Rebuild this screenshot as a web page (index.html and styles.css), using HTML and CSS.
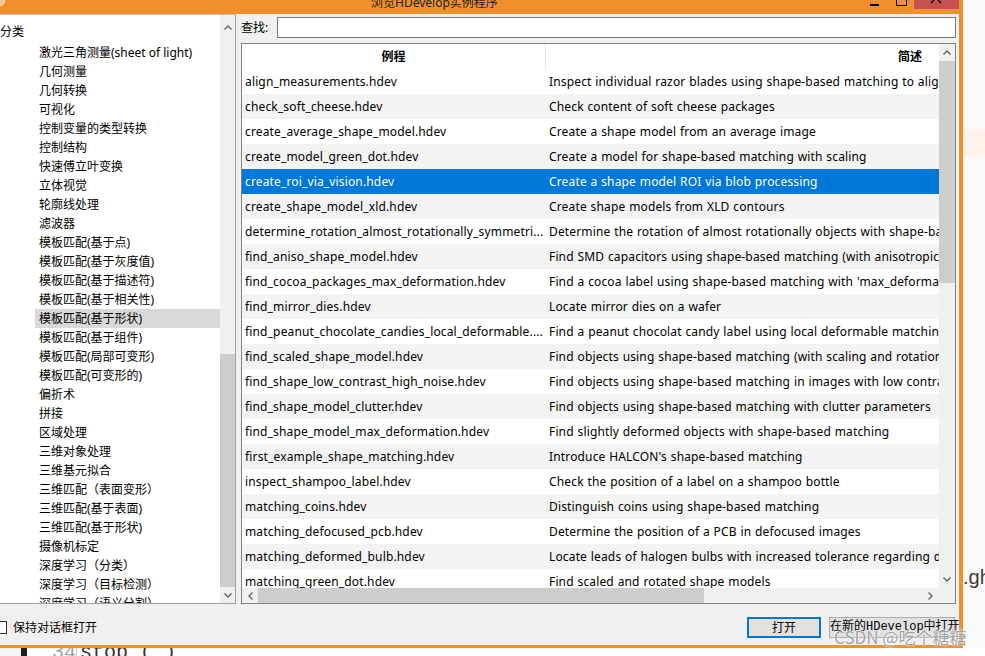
FILE: index.html
```html
<!DOCTYPE html>
<html lang="zh">
<head>
<meta charset="utf-8">
<title>浏览HDevelop实例程序</title>
<link rel="stylesheet" href="styles.css">
</head>
<body>
<div class="window">
  <div class="titlebar">
    <svg class="appicon" width="8" height="8" viewBox="0 0 8 8"><circle cx="2" cy="1" r="4.5" fill="#f7c48e" stroke="#fbe3c8" stroke-width="1"/></svg>
    <div class="title">浏览HDevelop实例程序</div>
    <div class="winbtns">
      <svg class="wb-min" width="9" height="14" viewBox="0 0 9 14"><rect x="0" y="4" width="9" height="2" fill="#000"/></svg>
      <svg class="wb-max" width="11" height="14" viewBox="0 0 11 14"><rect x="0.5" y="-4.5" width="10" height="10" fill="none" stroke="#000" stroke-width="1"/></svg>
      <div class="wb-close"><svg width="45" height="9" viewBox="0 0 45 9"><path d="M17 -7 L27 3 M27 -7 L17 3" stroke="#000" stroke-width="1.2" fill="none"/></svg></div>
    </div>
  </div>
  <div class="main">
    <div class="tree">
      <div class="tree-list">
        <div class="tree-head">分类</div>
        <div class="tree-item">激光三角测量(sheet of light)</div>
        <div class="tree-item">几何测量</div>
        <div class="tree-item">几何转换</div>
        <div class="tree-item">可视化</div>
        <div class="tree-item">控制变量的类型转换</div>
        <div class="tree-item">控制结构</div>
        <div class="tree-item">快速傅立叶变换</div>
        <div class="tree-item">立体视觉</div>
        <div class="tree-item">轮廓线处理</div>
        <div class="tree-item">滤波器</div>
        <div class="tree-item">模板匹配(基于点)</div>
        <div class="tree-item">模板匹配(基于灰度值)</div>
        <div class="tree-item">模板匹配(基于描述符)</div>
        <div class="tree-item">模板匹配(基于相关性)</div>
        <div class="tree-item sel">模板匹配(基于形状)</div>
        <div class="tree-item">模板匹配(基于组件)</div>
        <div class="tree-item">模板匹配(局部可变形)</div>
        <div class="tree-item">模板匹配(可变形的)</div>
        <div class="tree-item">偏折术</div>
        <div class="tree-item">拼接</div>
        <div class="tree-item">区域处理</div>
        <div class="tree-item">三维对象处理</div>
        <div class="tree-item">三维基元拟合</div>
        <div class="tree-item">三维匹配（表面变形）</div>
        <div class="tree-item">三维匹配(基于表面)</div>
        <div class="tree-item">三维匹配(基于形状)</div>
        <div class="tree-item">摄像机标定</div>
        <div class="tree-item">深度学习（分类）</div>
        <div class="tree-item">深度学习（目标检测）</div>
        <div class="tree-item">深度学习（语义分割）</div>
      </div>
      <div class="vscroll tree-scroll">
        <div class="sb-btn tree-up"><svg width="8" height="5" viewBox="0 0 8 5"><path d="M0.5 4.5 L4 1 L7.5 4.5" fill="none" stroke="#606060" stroke-width="1.3"/></svg></div>
        <div class="sb-track"><div class="sb-thumb tree-thumb"></div></div>
        <div class="sb-btn tree-down"><svg width="8" height="5" viewBox="0 0 8 5"><path d="M0.5 0.5 L4 4 L7.5 0.5" fill="none" stroke="#606060" stroke-width="1.3"/></svg></div>
      </div>
    </div>
    <div class="right">
      <div class="search">
        <span class="search-label">查找:</span>
        <div class="search-input"></div>
      </div>
      <div class="table">
        <div class="tbody">
          <div class="thead"><div class="c1">例程</div><div class="c2">简述</div></div>
          <div class="row"><div class="c1">align_measurements.hdev</div><div class="c2">Inspect individual razor blades using shape-based matching to align the measurements</div></div>
          <div class="row"><div class="c1">check_soft_cheese.hdev</div><div class="c2">Check content of soft cheese packages</div></div>
          <div class="row"><div class="c1">create_average_shape_model.hdev</div><div class="c2">Create a shape model from an average image</div></div>
          <div class="row"><div class="c1">create_model_green_dot.hdev</div><div class="c2">Create a model for shape-based matching with scaling</div></div>
          <div class="row sel"><div class="c1">create_roi_via_vision.hdev</div><div class="c2">Create a shape model ROI via blob processing</div></div>
          <div class="row"><div class="c1">create_shape_model_xld.hdev</div><div class="c2">Create shape models from XLD contours</div></div>
          <div class="row"><div class="c1">determine_rotation_almost_rotationally_symmetri...</div><div class="c2">Determine the rotation of almost rotationally objects with shape-based matching</div></div>
          <div class="row"><div class="c1">find_aniso_shape_model.hdev</div><div class="c2">Find SMD capacitors using shape-based matching (with anisotropic scaling)</div></div>
          <div class="row"><div class="c1">find_cocoa_packages_max_deformation.hdev</div><div class="c2">Find a cocoa label using shape-based matching with 'max_deformation'</div></div>
          <div class="row"><div class="c1">find_mirror_dies.hdev</div><div class="c2">Locate mirror dies on a wafer</div></div>
          <div class="row"><div class="c1">find_peanut_chocolate_candies_local_deformable....</div><div class="c2">Find a peanut chocolat candy label using local deformable matching</div></div>
          <div class="row"><div class="c1">find_scaled_shape_model.hdev</div><div class="c2">Find objects using shape-based matching (with scaling and rotation)</div></div>
          <div class="row"><div class="c1">find_shape_low_contrast_high_noise.hdev</div><div class="c2">Find objects using shape-based matching in images with low contrast and high noise</div></div>
          <div class="row"><div class="c1">find_shape_model_clutter.hdev</div><div class="c2">Find objects using shape-based matching with clutter parameters</div></div>
          <div class="row"><div class="c1">find_shape_model_max_deformation.hdev</div><div class="c2">Find slightly deformed objects with shape-based matching</div></div>
          <div class="row"><div class="c1">first_example_shape_matching.hdev</div><div class="c2">Introduce HALCON's shape-based matching</div></div>
          <div class="row"><div class="c1">inspect_shampoo_label.hdev</div><div class="c2">Check the position of a label on a shampoo bottle</div></div>
          <div class="row"><div class="c1">matching_coins.hdev</div><div class="c2">Distinguish coins using shape-based matching</div></div>
          <div class="row"><div class="c1">matching_defocused_pcb.hdev</div><div class="c2">Determine the position of a PCB in defocused images</div></div>
          <div class="row"><div class="c1">matching_deformed_bulb.hdev</div><div class="c2">Locate leads of halogen bulbs with increased tolerance regarding deformations</div></div>
          <div class="row"><div class="c1">matching_green_dot.hdev</div><div class="c2">Find scaled and rotated shape models</div></div>
        </div>
        <div class="vscroll table-vs">
          <div class="sb-btn"><svg width="8" height="5" viewBox="0 0 8 5"><path d="M0.5 4.5 L4 1 L7.5 4.5" fill="none" stroke="#606060" stroke-width="1.3"/></svg></div>
          <div class="sb-track"><div class="sb-thumb table-thumb"></div></div>
          <div class="sb-btn"><svg width="8" height="5" viewBox="0 0 8 5"><path d="M0.5 0.5 L4 4 L7.5 0.5" fill="none" stroke="#606060" stroke-width="1.3"/></svg></div>
        </div>
        <div class="hscroll">
          <div class="hs-btn hs-left"><svg width="5" height="8" viewBox="0 0 5 8"><path d="M4.5 0.5 L1 4 L4.5 7.5" fill="none" stroke="#606060" stroke-width="1.3"/></svg></div>
          <div class="hs-thumb"></div>
          <div class="hs-track"></div>
          <div class="hs-btn hs-right"><svg width="5" height="8" viewBox="0 0 5 8"><path d="M0.5 0.5 L4 4 L0.5 7.5" fill="none" stroke="#606060" stroke-width="1.3"/></svg></div>
        </div>
        <div class="corner"></div>
      </div>
    </div>
  </div>
  <div class="footer">
    <label class="keep"><span class="box"></span>保持对话框打开</label>
    <div class="buttons">
      <button class="btn primary">打开</button>
      <button class="btn alt">在新的HDevelop中打开</button>
    </div>
  </div>
</div>
<div class="side">
  <div class="peach"></div>
  <div class="gh">.gh</div>
</div>
<div class="editor">
  <span class="gut-a"></span>
  <span class="gut-b"></span>
  <span class="lineno">34</span>
  <span class="gut-line"></span>
  <span class="code">stop ( )</span>
</div>
<div class="watermark">CSDN @吃个糖糖</div>
</body>
</html>
```
FILE: styles.css
```css
html, body {
  margin: 0;
  padding: 0;
}
body {
  position: relative;
  width: 985px;
  height: 656px;
  overflow: hidden;
  background: #fafafa;
  display: grid;
  grid-template-columns: 963px 22px;
  grid-template-rows: 648px 8px;
  font-family: "Noto Sans", "Noto Sans CJK SC", sans-serif;
  font-size: 12px;
  color: #000;
}

/* ---------- window ---------- */
.window {
  display: flex;
  flex-direction: column;
  background: #f0f0f0;
  border-right: 4px solid #f0902b;
  border-bottom: 3px solid #f0902b;
  overflow: hidden;
}
.titlebar {
  flex: none;
  height: 14px;
  background: #f0902b;
  display: flex;
  align-items: flex-start;
  overflow: hidden;
}
.appicon {
  flex: none;
  margin-left: -2px;
}
.title {
  margin-left: 365px;
  margin-top: -3px;
  line-height: 12px;
  font-size: 12px;
  color: #1e1e1e;
  white-space: nowrap;
}
.winbtns {
  margin-left: auto;
  display: flex;
  align-items: flex-start;
}
.wb-min { margin-right: 17px; }
.wb-max { margin-right: 7px; }
.wb-close {
  width: 45px;
  height: 9px;
  background: #c75050;
  display: flex;
}

.main {
  flex: none;
  height: 590px;
  display: flex;
  gap: 5px;
  padding-right: 3px;
}

/* ---------- tree ---------- */
.tree {
  flex: none;
  width: 236px;
  box-sizing: border-box;
  background: #fff;
  border-top: 1px solid #c4c4c4;
  border-right: 1px solid #a0a0a0;
  border-bottom: 1px solid #a0a0a0;
  display: flex;
}
.tree-list {
  width: 220px;
  flex: none;
  overflow: hidden;
}
.tree-head {
  height: 28px;
  box-sizing: border-box;
  padding-top: 7px;
  line-height: 19px;
  white-space: nowrap;
}
.tree-item {
  height: 19px;
  line-height: 19px;
  margin-left: 35px;
  padding-left: 4px;
  white-space: nowrap;
}
.tree-item.sel { background: #d9d9d9; }

.vscroll {
  background: #f0f0f0;
  display: flex;
  flex-direction: column;
}
.tree-scroll {
  width: 15px;
  flex: none;
}
.sb-btn {
  flex: none;
  height: 17px;
  display: flex;
  align-items: center;
  justify-content: center;
}
.tree-up { height: 24px; }
.tree-down { height: 16px; }
.sb-track {
  flex: 1;
  display: flex;
  flex-direction: column;
}
.sb-thumb { background: #cdcdcd; }
.tree-thumb {
  margin-top: 315px;
  flex: 1;
}
.table-thumb {
  height: 222px;
}

/* ---------- right side ---------- */
.right {
  flex: 1;
  display: flex;
  flex-direction: column;
  padding-top: 3px;
  gap: 5px;
  min-width: 0;
}
.search {
  flex: none;
  height: 21px;
  display: flex;
  align-items: center;
}
.search-label {
  flex: none;
  width: 36px;
  line-height: 19px;
}
.search-input {
  flex: 1;
  height: 21px;
  box-sizing: border-box;
  border: 1px solid #7a7a7a;
  background: #fff;
}
.table {
  flex: none;
  height: 561px;
  box-sizing: border-box;
  border: 1px solid #828282;
  background: #fff;
  display: grid;
  grid-template-columns: 1fr 16px;
  grid-template-rows: 1fr 15px;
  min-width: 0;
}
.tbody {
  overflow: hidden;
  min-width: 0;
}
.thead, .row {
  display: flex;
  height: 25px;
  line-height: 26px;
  white-space: nowrap;
  overflow: hidden;
}
.row {
  letter-spacing: 0.15px;
  word-spacing: 0.5px;
}
.c1 {
  flex: none;
  width: 304px;
  box-sizing: border-box;
  padding-left: 3px;
  overflow: hidden;
}
.c2 {
  flex: none;
  width: 728px;
  box-sizing: border-box;
  padding-left: 3px;
}
.thead .c1 {
  padding-left: 0;
  text-align: center;
  font-weight: bold;
  border-right: 1px solid #e5e5e5;
}
.thead .c2 {
  padding-left: 0;
  text-align: center;
  font-weight: bold;
}
.row:nth-child(odd) { background: #f3f3f3; }
.row.sel {
  background: #0078d7;
  color: #fff;
}

.hscroll {
  display: flex;
  background: #f0f0f0;
  min-width: 0;
}
.hs-btn {
  flex: none;
  display: flex;
  align-items: center;
  justify-content: center;
}
.hs-left { width: 16px; }
.hs-right { width: 17px; }
.hs-thumb {
  flex: none;
  width: 446px;
  background: #cdcdcd;
}
.hs-track { flex: 1; }
.corner { background: #f0f0f0; }

/* ---------- footer ---------- */
.footer {
  flex: none;
  height: 41px;
  box-sizing: border-box;
  padding-top: 5px;
  padding-right: 4px;
  display: flex;
  align-items: center;
}
.keep {
  display: flex;
  align-items: center;
  line-height: 19px;
  white-space: nowrap;
}
.box {
  width: 13px;
  height: 13px;
  box-sizing: border-box;
  border: 1px solid #333;
  background: #fff;
  margin-left: -6px;
  margin-right: 6px;
}
.buttons {
  margin-left: auto;
  display: flex;
  gap: 8px;
}
.btn {
  height: 21px;
  box-sizing: border-box;
  padding: 0;
  margin: 0;
  background: #e1e1e1;
  border: 1px solid #adadad;
  font-family: "Noto Sans", "Noto Sans CJK SC", sans-serif;
  font-size: 12px;
  line-height: 17px;
  color: #000;
}
.btn.primary {
  width: 74px;
  border: 2px solid #0078d7;
}
.btn.alt {
  width: 126px;
  font-family: "Liberation Mono", "Noto Sans CJK SC", monospace;
  white-space: nowrap;
}

/* ---------- background app ---------- */
.side {
  display: flex;
  flex-direction: column;
  background: #fafafa;
  overflow: hidden;
}
.peach {
  margin-top: 129px;
  height: 27px;
  background: #fdf3ea;
}
.gh {
  margin-top: 410px;
  font-family: "Liberation Sans", sans-serif;
  font-size: 20px;
  line-height: 22px;
  color: #3a3a3a;
  white-space: nowrap;
}
.editor {
  grid-column: 1 / 3;
  background: #fff;
  display: flex;
  align-items: flex-start;
  overflow: hidden;
  font-family: "Liberation Mono", monospace;
  font-size: 20px;
  line-height: 24px;
}
.gut-a {
  width: 21px;
  height: 8px;
  background: #f4f4f4;
}
.gut-b {
  width: 6px;
  height: 8px;
  background: #1e1e1e;
}
.lineno {
  margin-left: 25px;
  margin-top: -7px;
  color: #9e9e9e;
  width: 24px;
}
.gut-line {
  width: 1px;
  height: 8px;
  background: #c8c8c8;
  margin-right: 3px;
}
.code {
  margin-top: -7px;
  color: #333;
  white-space: pre;
}

.watermark {
  position: absolute;
  left: 834px;
  top: 626px;
  font-family: "Noto Sans CJK SC", sans-serif;
  font-size: 17px;
  line-height: 22px;
  color: rgba(130, 130, 130, 0.75);
  text-shadow: 0 0 1px #fff, 0 0 2px #fff;
  white-space: nowrap;
}
```
